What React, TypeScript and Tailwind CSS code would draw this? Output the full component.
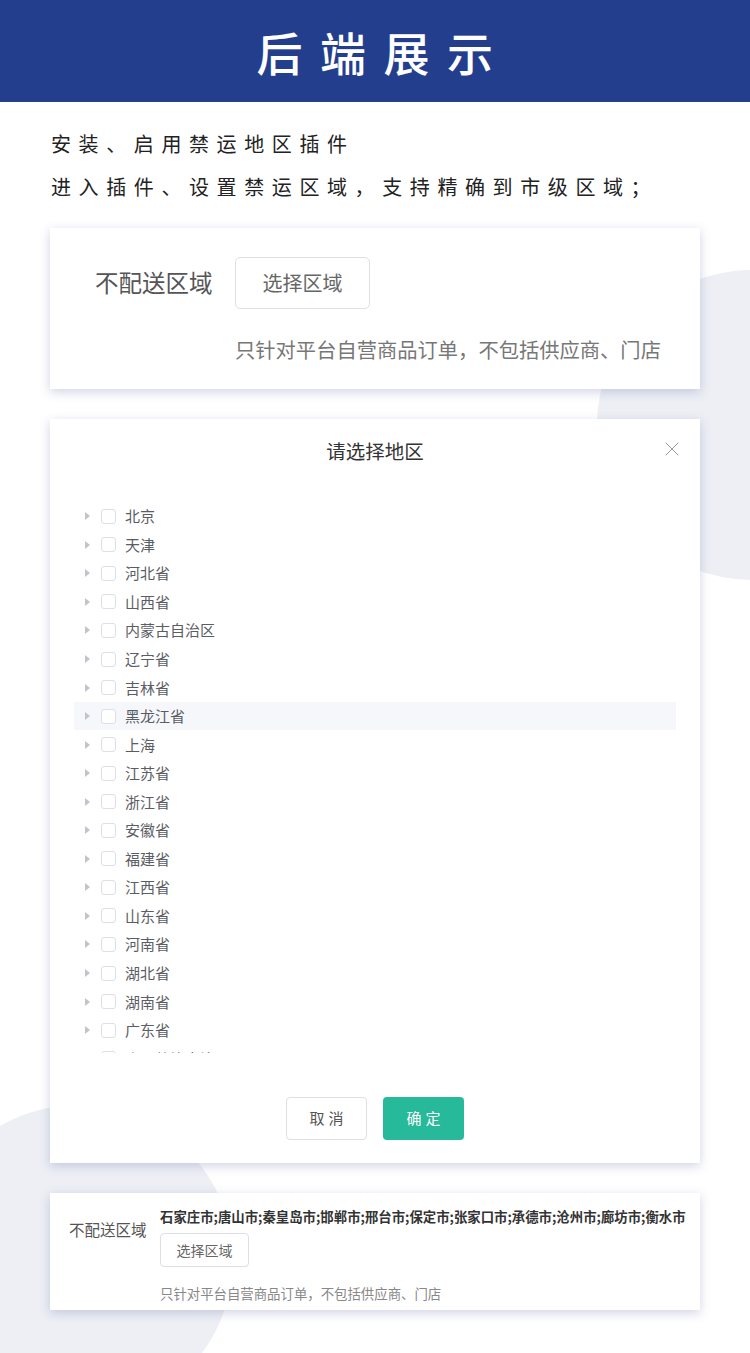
import { X } from "lucide-react";

const provinces = [
  "北京",
  "天津",
  "河北省",
  "山西省",
  "内蒙古自治区",
  "辽宁省",
  "吉林省",
  "黑龙江省",
  "上海",
  "江苏省",
  "浙江省",
  "安徽省",
  "福建省",
  "江西省",
  "山东省",
  "河南省",
  "湖北省",
  "湖南省",
  "广东省",
  "广西壮族自治区",
];

const cities =
  "石家庄市;唐山市;秦皇岛市;邯郸市;邢台市;保定市;张家口市;承德市;沧州市;廊坊市;衡水市";

const cardShadow = "shadow-[0_3px_10px_rgba(88,98,160,0.28)]";

function TreeRow({ name, active }: { name: string; active?: boolean }) {
  return (
    <div
      className={`flex h-[28.56px] shrink-0 items-center pl-[11px] ${
        active ? "bg-[#f5f7fa]" : ""
      }`}
    >
      <svg width="6" height="8" viewBox="0 0 6 8" className="mr-[10px] shrink-0">
        <polygon points="0,0 5,4 0,8" fill="#c0c4cc" />
      </svg>
      <span className="h-[15px] w-[15px] shrink-0 rounded-[3px] border border-[#dcdfe6] bg-white" />
      <span className="ml-[9px] text-[15px] leading-5 text-[#5a5d63]">{name}</span>
    </div>
  );
}

export default function App() {
  return (
    <div className="relative min-h-[1353px] w-[750px] overflow-hidden bg-white font-['Noto_Sans_CJK_SC',sans-serif]">
      {/* background blobs */}
      <div className="absolute left-[597px] top-[270px] h-[310px] w-[310px] rounded-full bg-[#edeff5]" />
      <div className="absolute left-[-77px] top-[1105px] h-[310px] w-[310px] rounded-full bg-[#edeff5]" />

      <div className="relative">
        <header className="flex h-[102px] items-center justify-center bg-[#233e8d]">
          <h1 className="pl-[17px] text-[46px] font-medium leading-none tracking-[17.5px] text-white">
            后端展示
          </h1>
        </header>

        <div className="pl-[51px] pt-[20px] text-[20px] leading-[43px] tracking-[7.6px] text-[#222]">
          <p>安装、启用禁运地区插件</p>
          <p>进入插件、设置禁运区域，支持精确到市级区域；</p>
        </div>

        {/* card 1 */}
        <section className={`mx-[50px] mt-[20px] bg-white pb-[26px] pt-[29px] ${cardShadow}`}>
          <div className="flex items-center pl-[45px]">
            <span className="w-[140px] text-[23.5px] text-[#555]">不配送区域</span>
            <button
              type="button"
              className="flex h-[52px] w-[135px] items-center justify-center rounded-[5px] border border-[#dcdfe6] text-[20px] text-[#666]"
            >
              选择区域
            </button>
          </div>
          <p className="mt-[26px] pl-[185px] text-[20.3px] leading-[28px] text-[#777]">
            只针对平台自营商品订单，不包括供应商、门店
          </p>
        </section>

        {/* region dialog */}
        <section className={`mx-[50px] mt-[30px] bg-white pb-[23px] ${cardShadow}`}>
          <div className="relative flex h-[64px] items-center justify-center">
            <h2 className="text-[19.5px] text-[#333]">请选择地区</h2>
            <X
              size={24}
              strokeWidth={1}
              className="absolute right-[16px] top-[18px] text-[#999]"
            />
          </div>
          <div className="mx-[24px] mt-[19px] flex h-[551px] flex-col overflow-hidden">
            {provinces.map((p) => (
              <TreeRow key={p} name={p} active={p === "黑龙江省"} />
            ))}
          </div>
          <div className="mt-[44px] flex justify-center gap-[16px]">
            <button
              type="button"
              className="h-[43px] w-[81px] rounded-[4px] border border-[#dcdfe6] bg-white pl-[4px] text-[15px] tracking-[4px] text-[#555]"
            >
              取消
            </button>
            <button
              type="button"
              className="h-[43px] w-[81px] rounded-[4px] bg-[#26b99a] pl-[4px] text-[15px] tracking-[4px] text-white"
            >
              确定
            </button>
          </div>
        </section>

        {/* card 3 */}
        <section className={`mx-[50px] mb-[43px] mt-[30px] flex bg-white ${cardShadow}`}>
          <span className="w-[110px] shrink-0 pl-[19px] pt-[26px] text-[15.5px] leading-5 text-[#555]">
            不配送区域
          </span>
          <div className="flex flex-col items-start pb-[7px] pt-[13px]">
            <p className="whitespace-nowrap text-[13.4px] font-bold leading-5 text-[#333]">
              {cities}
            </p>
            <button
              type="button"
              className="mt-[7px] flex h-[34px] w-[89px] items-center justify-center rounded-[4px] border border-[#dcdfe6] text-[14px] text-[#666]"
            >
              选择区域
            </button>
            <p className="mt-[16px] text-[13.4px] leading-5 text-[#888]">
              只针对平台自营商品订单，不包括供应商、门店
            </p>
          </div>
        </section>
      </div>
    </div>
  );
}
